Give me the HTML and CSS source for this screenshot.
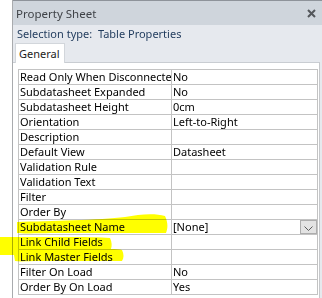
FILE: index.html
```html
<!DOCTYPE html>
<html>
<head>
<meta charset="utf-8">
<link rel="stylesheet" href="styles.css">
</head>
<body>
<div class="sheet">
  <div class="titlebar">
    <span class="title">Property Sheet</span>
    <svg class="close" width="9" height="9" viewBox="0 0 9 9"><path d="M1 1 L8 8 M8 1 L1 8" stroke="#54575b" stroke-width="2" fill="none"/></svg>
  </div>
  <div class="seltype">Selection type:&nbsp; Table Properties</div>
  <div class="tabs"><div class="tab">General</div></div>
  <div class="panel">
    <div class="grid">
      <div class="row"><div class="lbl">Read Only When Disconnected</div><div class="val">No</div></div>
      <div class="row"><div class="lbl">Subdatasheet Expanded</div><div class="val">No</div></div>
      <div class="row"><div class="lbl">Subdatasheet Height</div><div class="val">0cm</div></div>
      <div class="row"><div class="lbl">Orientation</div><div class="val">Left-to-Right</div></div>
      <div class="row"><div class="lbl">Description</div><div class="val"></div></div>
      <div class="row"><div class="lbl">Default View</div><div class="val">Datasheet</div></div>
      <div class="row"><div class="lbl">Validation Rule</div><div class="val"></div></div>
      <div class="row"><div class="lbl">Validation Text</div><div class="val"></div></div>
      <div class="row"><div class="lbl">Filter</div><div class="val"></div></div>
      <div class="row"><div class="lbl">Order By</div><div class="val"></div></div>
      <div class="row active"><div class="lbl">Subdatasheet Name</div><div class="val combo"><span>[None]</span><span class="drop"><svg width="9" height="5" viewBox="0 0 9 5"><path d="M0.5 0.5 L4.5 4.5 L8.5 0.5" stroke="#5a5a5a" stroke-width="1" fill="none"/></svg></span></div></div>
      <div class="row"><div class="lbl">Link Child Fields</div><div class="val"></div></div>
      <div class="row"><div class="lbl">Link Master Fields</div><div class="val"></div></div>
      <div class="row"><div class="lbl">Filter On Load</div><div class="val">No</div></div>
      <div class="row"><div class="lbl">Order By On Load</div><div class="val">Yes</div></div>
    </div>
  </div>
</div>
<svg class="marker" width="322" height="298" viewBox="0 0 322 298">
  <path d="M17 222 C50 221 100 220 125 217 C140 214 155 213 165 216 C168 222 168 228 166 233 L60 233 C40 233 25 234 17 233 Z" fill="#ffff00"/>
  <path d="M0 237 L60 237 C85 237 100 237 110 238 C112 242 112 246 111 249 C116 249 120 249 122 250 C124 254 124 258 122 261 L40 261 C28 261 20 262 15 261 L14 255 L0 255 Z" fill="#ffff00"/>
</svg>
</body>
</html>
```
FILE: styles.css
```css
html, body {
  margin: 0;
  padding: 0;
}
body {
  width: 322px;
  height: 298px;
  overflow: hidden;
  background: #ffffff;
  position: relative;
  font-family: "Noto Sans", "Open Sans", sans-serif;
}
.sheet {
  margin-left: 12px;
  border-left: 1px solid #a9abae;
  height: 298px;
  display: flex;
  flex-direction: column;
  background: #e6e9ee;
}
.titlebar {
  border-top: 1px solid #8e939a;
  height: 24px;
  background: #cfd5dc;
  display: flex;
  align-items: center;
  justify-content: space-between;
  padding: 0 6px 0 3px;
}
.title {
  font-size: 11.5px;
  color: #3f4247;
}
.close {
  display: block;
}
.seltype {
  height: 17px;
  line-height: 17px;
  padding-left: 4px;
  font-size: 11px;
  color: #1f3a5c;
  white-space: nowrap;
}
.tabs {
  height: 20px;
  display: flex;
  align-items: flex-end;
  padding-left: 2px;
}
.tab {
  position: relative;
  z-index: 1;
  margin-bottom: -1px;
  height: 20px;
  box-sizing: border-box;
  background: #ffffff;
  border: 1px solid #d2d6db;
  border-bottom: none;
  padding: 0 4px 0 3px;
  font-size: 11px;
  line-height: 19px;
  color: #1c1c1c;
}
.panel {
  flex: 1;
  background: #ffffff;
  border-top: 1px solid #c9cdd2;
  border-right: 1px solid #c6c8cb;
  margin-right: 2px;
  padding: 6px 1px 0 5px;
}
.grid {
  border: 1px solid #c3c3c3;
  border-bottom: none;
}
.row {
  display: grid;
  grid-template-columns: 153px 1fr;
  height: 15px;
  box-sizing: border-box;
  border-bottom: 1px solid #c3c3c3;
  font-size: 11px;
  line-height: 14px;
  color: #000000;
}
.lbl {
  border-right: 1px solid #c3c3c3;
  padding-left: 1px;
  white-space: nowrap;
  overflow: hidden;
}
.val {
  padding-left: 1px;
  white-space: nowrap;
  overflow: hidden;
}
.combo {
  display: flex;
  justify-content: space-between;
  align-items: stretch;
}
.drop {
  width: 17px;
  box-sizing: border-box;
  border: 1px solid #adadad;
  background: #e3e3e3;
  display: flex;
  align-items: center;
  justify-content: center;
  padding-top: 3px;
}
.drop svg {
  display: block;
}
.marker {
  position: absolute;
  left: 0;
  top: 0;
  mix-blend-mode: multiply;
  pointer-events: none;
}
```
